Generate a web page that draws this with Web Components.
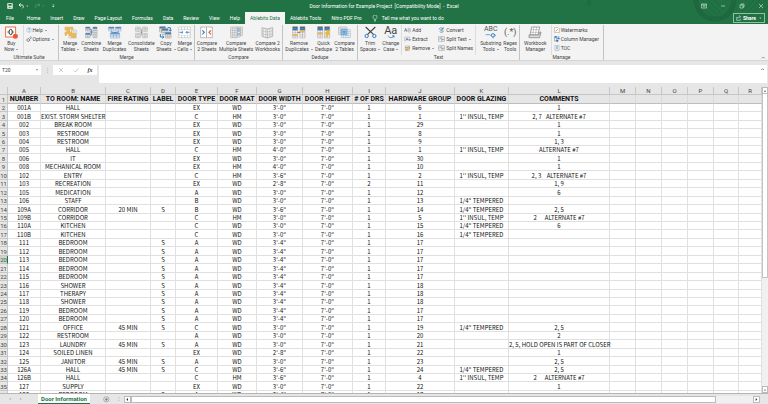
<!DOCTYPE html>
<html lang="en">
<head>
<meta charset="utf-8">
<title>Door Information for Example Project - Excel</title>
<style>
  html, body {
    height: 100%;
    margin: 0;
  }

  body {
    background: #e6e6e6;
    color: #444;
    font-family: Roboto, "Open Sans", sans-serif;
    font-size: 5px;
    line-height: 6px;
    overflow: hidden;
  }
</style>
</head>
<body>
<excel-window></excel-window>

<script>
const svg = (w, h, body) =>
  `<svg width="${w}" height="${h}" viewBox="0 0 ${w * 3} ${h * 3}" fill="none" aria-hidden="true">${body}</svg>`

// a small spreadsheet: outer box, inner lines and optional coloured header
const grid = (x, y, w, h, cols, rows, line = '#999', head = '') => {
  let d = ''
  for (let i = 0; i <= cols; i++) d += `M${x + w * i / cols} ${y}v${h}`
  for (let i = 0; i <= rows; i++) d += `M${x} ${y + h * i / rows}h${w}`
  const top = head ? `<path fill="${head}" d="M${x} ${y}h${w}v${h / rows}h${-w}z"/>` : ''
  return `<path fill="#fff" d="M${x} ${y}h${w}v${h}h${-w}z"/>${top}<path stroke="${line}" stroke-width="1.5" d="${d}"/>`
}

const BLUE = '#2f7cc4'
const SAND = '#e8b95c'

const icons = {
  buy: svg(13, 13, `
    <rect x="2" y="3" width="30" height="30" fill="#fff" stroke="#e8542f" stroke-width="2.5"/>
    <ellipse cx="17" cy="18" rx="5" ry="8" stroke="#333" stroke-width="3"/>
    <path stroke="#333" stroke-width="2" d="M7 18h5M22 18h5"/>
    <circle cx="31" cy="31" r="7.500" fill="#f0562f"/>`),
  mergeTables: svg(13, 13, `
    ${grid(15, 12, 22, 24, 3, 4, '#aaa')}
    <path fill="${SAND}" d="M2 2h26v11h-6v-4h-4v8h7v13H14v-6H9v5H2V17h5v-4H2z"/>
    <path fill="${SAND}" d="M24 21h12v15H20v-8h4z"/>`),
  combine: svg(13, 13, `
    ${grid(2, 3, 13, 12, 2, 3, '#888', BLUE)}${grid(2, 21, 13, 14, 2, 3, '#888', BLUE)}
    ${grid(24, 3, 12, 32, 2, 6, '#888', BLUE)}
    <path stroke="${BLUE}" stroke-width="2.500" d="M15 18h8M15 10h4v17h-4"/>`),
  duplicates: svg(14, 13, `
    ${grid(2, 3, 16, 12, 2, 3, '#7f9dbd', BLUE)}${grid(23, 3, 16, 12, 2, 3, '#7f9dbd', BLUE)}
    ${grid(7, 21, 28, 15, 3, 4, '#7f9dbd', '#5ba3dc')}
    <path stroke="${BLUE}" stroke-width="2.500" d="M10 16v3h21v-3M20.500 18v4"/>`),
  consolidate: svg(13, 13, `
    ${grid(2, 3, 14, 13, 2, 3)}${grid(23, 3, 14, 13, 2, 3)}${grid(2, 22, 14, 13, 2, 3)}${grid(23, 22, 14, 13, 2, 3)}
    <path stroke="#888" stroke-width="2" d="M16 19h7M19.500 10v18"/>`),
  copySheets: svg(13, 13, `
    ${grid(2, 2, 17, 16, 3, 3, '#888', BLUE)}${grid(9, 8, 18, 17, 3, 3, '#888', BLUE)}${grid(19, 19, 17, 17, 3, 3, '#888', BLUE)}
    <path stroke="${BLUE}" stroke-width="3" d="M26 5h8v10M30 11l4 5 4-5M4 24v9h10M10 29l5 4-5 4"/>`),
  mergeCells: svg(13, 13, `
    ${grid(2, 3, 35, 32, 4, 4, '#b5b5b5')}
    <path fill="#fff" d="M7 12h25v15H7z"/>
    <path stroke="${BLUE}" stroke-width="2.500" d="M5 19h10M24 19h10M11 15l4 4-4 4M28 15l-4 4 4 4"/>`),
  compareSheets: svg(13, 13, `
    <path fill="#fff" stroke="#999" stroke-width="2" d="M17 3H2v32h15M22 3h15v32H22"/>
    <path stroke="#777" stroke-width="1.500" d="M19.500 1v36"/>
    <path stroke="${BLUE}" stroke-width="3.500" d="M7 13l6 6-6 6"/>
    <path stroke="#e8542f" stroke-width="3.500" d="M33 13l-6 6 6 6"/>`),
  compareMultiple: svg(13, 13, `
    ${grid(18, 3, 19, 26, 3, 5, '#999')}${grid(10, 6, 20, 27, 3, 5, '#999', '#bcd5ec')}${grid(2, 3, 19, 32, 3, 6, '#999')}
    <path fill="#8db9e0" d="M22 11h7v6h-7zM22 21h7v6h-7z"/>`),
  compareBooks: svg(14, 13, `
    <path fill="#f7f7f7" stroke="#999" stroke-width="2" d="M3 5l16 4 16-4v26l-16 5-16-5zM19 9v27"/>
    <path stroke="#aaa" stroke-width="1.500" d="M8 7v26M14 8v26M25 8v26M30 7v26M3 14l16 4 16-4M3 23l16 4 16-4"/>`),
  removeDup: svg(14, 13, `
    ${grid(2, 2, 15, 34, 2, 6, '#999', '#555')}${grid(24, 2, 15, 34, 2, 6, '#999', '#555')}
    <path fill="${BLUE}" d="M2 7h15v6H2zM24 7h15v6H24z"/>
    <path fill="${SAND}" d="M2 24h15v6H2zM24 13h15v6H24z"/>
    <path stroke="#333" stroke-width="2" d="M17 19h7"/>`),
  quickDedupe: svg(14, 13, `
    ${grid(2, 2, 15, 34, 2, 6, '#999', '#555')}${grid(23, 2, 15, 34, 2, 6, '#999', '#555')}
    <path fill="${BLUE}" d="M2 7h15v6H2zM23 7h15v6H23z"/>
    <path fill="${SAND}" d="M2 19h15v6H2z"/>
    <path fill="#f2b233" d="M31 11h8l-4 9h5L25 38l4-13h-5z"/>`),
  compareTables: svg(13, 13, `
    ${grid(2, 3, 25, 23, 4, 4, '#999')}${grid(10, 11, 27, 24, 4, 4, '#8aa9c7')}
    <path fill="#a9cdec" stroke="${BLUE}" stroke-width="1.500" d="M10 11h17v15H10z"/>
    <path stroke="${BLUE}" stroke-width="2.500" d="M14 17h9M14 21h9"/>`),
  trim: svg(13, 13, `
    <path stroke="#444" stroke-width="3.500" d="M5 3l24 23M34 3L10 26"/>
    <circle cx="8" cy="30" r="5" stroke="${BLUE}" stroke-width="3"/>
    <circle cx="31" cy="30" r="5" stroke="${BLUE}" stroke-width="3"/>`),
  workbook: svg(14, 13, `
    <path fill="#fff" stroke="#777" stroke-width="2" d="M11 3h24l-5 24H6z"/>
    <path stroke="#999" stroke-width="1.500" d="M18 3l-4 24M26 3l-4 24M9 11h24M8 19h24"/>
    <path fill="#ddd" stroke="#777" stroke-width="2" d="M3 27h29l4-9h3l-4 17H3z"/>`),
  help: svg(6, 6, `<circle cx="9" cy="9" r="7" fill="#fff" stroke="#8aa4bf" stroke-width="1.500"/><path stroke="${BLUE}" stroke-width="2" d="M7 7c0-3 5-3 4 0l-2 2v2M9 12v2"/>`),
  options: svg(6, 6, `<circle cx="7" cy="12" r="4" stroke="#666" stroke-width="2"/><circle cx="14" cy="5" r="2.500" stroke="#666" stroke-width="1.500"/><path stroke="#666" stroke-width="1.500" d="M7 6v2M1 12h2M12 12h2M7 16v2"/>`),
  add: svg(7, 6, `<path fill="#fff" stroke="#999" stroke-width="1.500" d="M12 4h7v11h-7z"/><path stroke="#444" stroke-width="1.500" d="M1 14L5 4l4 10M3 11h5"/><path stroke="${BLUE}" stroke-width="2" d="M15 6v7"/>`),
  extract: svg(7, 6, `<path stroke="#999" stroke-width="1.500" d="M2 3v12h4M2 3h15v4"/><path stroke="#444" stroke-width="1.500" d="M6 13l3-7 3 7M7 11h4"/><path stroke="${BLUE}" stroke-width="2" d="M13 11h6M16 8l3 3-3 4"/>`),
  remove: svg(7, 6, `<path fill="#fff" stroke="#888" stroke-width="1.500" d="M4 3h12v13H4z"/><path stroke="#444" stroke-width="1.500" d="M4 8h9"/><path fill="${SAND}" stroke="#a56a2d" d="M6 13l8-8 4 3-8 8H6z"/>`),
  convert: svg(7, 6, `<path stroke="${BLUE}" stroke-width="2" d="M3 8c0-6 9-7 12-3M11 6h5V1M17 11c-1 6-9 6-12 3"/><path stroke="#555" stroke-width="1.500" d="M7 8h7M7 11h7"/>`),
  split: svg(7, 6, `<path fill="#fff" stroke="#888" stroke-width="1.500" d="M2 2h17v14H2z"/><path stroke="${BLUE}" stroke-width="2" d="M5 6h5M12 11h5"/><path stroke="#888" stroke-width="1.500" d="M2 9h17M11 2v14"/>`),
  watermark: svg(6, 6, `<path fill="#fff" stroke="#888" stroke-width="1.500" d="M2 1h10l4 4v12H2z"/><path stroke="#e88b3a" stroke-width="2.500" d="M5 13l7-7"/>`),
  columns: svg(6, 6, `<path fill="#fff" stroke="#555" stroke-width="1.500" d="M2 2h6v13H2z"/><path fill="${BLUE}" d="M2 1h6v4H2zM10 6h7v4h-7zM7 12h6v5H7z"/><path stroke="${BLUE}" stroke-width="1.500" d="M10 3h6M14 1v5"/>`),
  toc: svg(6, 6, `<path fill="#fff" stroke="#888" stroke-width="1.500" d="M3 1h12v15H3z"/><path stroke="${BLUE}" stroke-width="1.500" d="M6 5h6M6 8h6M6 11h6"/>`),
}

// glyph icons whose letters stay text
const glyphs = {
  changeCase: `<span style="font:11px/9px Roboto,sans-serif;color:#444">Aa</span>${svg(8, 4, `<path stroke="${BLUE}" stroke-width="2.500" d="M3 2c4 8 14 8 18 0M15 3l6-1v6"/>`)}`,
  regex: `<span style="font:9px/13px Roboto,sans-serif;color:#555">(.*)</span>`,
  substring: `<span style="font:7px/7px Roboto,sans-serif;color:#555">ABC</span>${svg(12, 6, `<path stroke="${BLUE}" stroke-width="2" d="M2 5h13"/><circle cx="24" cy="7" r="5" stroke="${BLUE}" stroke-width="3"/><path stroke="${BLUE}" stroke-width="2" d="M24 12v4M16 7h3M29 7h4"/>`)}`,
}

const resetButton = `
  button {
    margin: 0;
    padding: 0;
    border: none;
    background: none;
    color: inherit;
    font: inherit;
    white-space: nowrap;
  }

  svg {
    display: block;
    flex: none;
  }
`

class TitleBar extends HTMLElement {
  constructor () {
    super()
    this.attachShadow({ mode: 'open' })
  }

  connectedCallback () {
    this.shadowRoot.innerHTML = /* html */`
      <style>
        ${resetButton}
        :host {
          display: grid;
          grid-template-columns: 1fr auto 1fr;
          align-items: center;
          height: 12px;
          padding: 0 4px;
          color: #fff;
        }

        h1 {
          margin: 0;
          font-size: 5px;
          font-weight: 400;
          line-height: 10px;
          white-space: pre;
        }

        .quick, .controls {
          display: flex;
          align-items: center;
        }

        .quick {
          gap: 5px;
          padding-left: 3px;
        }

        .controls {
          gap: 13px;
          justify-content: flex-end;
        }
      </style>
      <div class="quick">
        <button aria-label="Save">${svg(6, 6, '<path fill="#fff" fill-rule="evenodd" d="M1 1h16v16H1zM4 3v5h10V3zM5 11v4h3v-2h3v2h2v-4z"/>')}</button>
        <button aria-label="Undo">${svg(11, 6, '<path stroke="#fff" stroke-width="2.5" d="M8 1L3 6l5 5M3 6h9c5 0 5 8 1 10"/><path fill="#fff" d="M25 8h6l-3 3z"/>')}</button>
        <button aria-label="Redo">${svg(11, 6, '<path stroke="#5f9f7c" stroke-width="2" d="M13 1l5 5-5 5M18 6H8c-5 0-5 8-1 10"/><path fill="#5f9f7c" d="M25 8h6l-3 3z"/>')}</button>
        <button aria-label="Customize toolbar">${svg(6, 6, '<path fill="#fff" d="M7 5h6v2H7zM7 9h6l-3 4z"/>')}</button>
      </div>
      <h1>Door Information for Example Project  [Compatibility Mode]  -  Excel</h1>
      <div class="controls">
        <button aria-label="Ribbon display options">${svg(6, 6, '<path stroke="#fff" stroke-width="1.5" d="M1 3h16v12H1zM1 6h16M9 13V8M6 11l3-3 3 3"/>')}</button>
        <button aria-label="Minimize">${svg(6, 6, '<path stroke="#fff" stroke-width="1.5" d="M3 9h12"/>')}</button>
        <button aria-label="Restore">${svg(6, 6, '<path stroke="#fff" stroke-width="1.5" d="M3 6h9v9H3zM6 6V3h9v9h-3"/>')}</button>
        <button aria-label="Close">${svg(6, 6, '<path stroke="#fff" stroke-width="1.5" d="M3 3l12 12M15 3L3 15"/>')}</button>
      </div>
    `
  }
}

class MenuTabs extends HTMLElement {
  constructor () {
    super()
    this.attachShadow({ mode: 'open' })
  }

  connectedCallback () {
    const tabs = ['File', 'Home', 'Insert', 'Draw', 'Page Layout', 'Formulas', 'Data', 'Review', 'View', 'Help', 'Ablebits Data', 'Ablebits Tools', 'Nitro PDF Pro']
    this.shadowRoot.innerHTML = /* html */`
      <style>
        ${resetButton}
        :host {
          display: flex;
          align-items: stretch;
          height: 12px;
          padding-right: 3px;
          color: #fff;
        }

        nav {
          display: flex;
          flex: 1;
        }

        nav button {
          padding: 0 5px;
        }

        /* File opens a page of its own, so it stands apart */
        nav button:first-child {
          padding: 0 8px 0 6px;
        }

        nav button[aria-selected] {
          background: #f3f3f3;
          color: #217346;
        }

        nav .tell {
          display: flex;
          align-items: center;
          gap: 4px;
        }

        .share {
          display: flex;
          align-items: center;
          align-self: center;
          gap: 2px;
          height: 10px;
          padding: 0 2px;
          border: 1px solid #8fc0a5;
          font-weight: 700;
        }
      </style>
      <nav role="tablist">
        ${tabs.map(tab => `<button role="tab"${tab === 'Ablebits Data' ? ' aria-selected="true"' : ''}>${tab}</button>`).join('')}
        <button class="tell">${svg(6, 7, '<path stroke="#fff" stroke-width="1.5" d="M6 13c0-3-3-3-3-7a6 6 0 0 1 12 0c0 4-3 4-3 7zM6 16h6M7 19h4"/>')}Tell me what you want to do</button>
      </nav>
      <button class="share">${svg(5, 6, '<path stroke="#fff" stroke-width="1.5" d="M5 7H2v9h11v-5M5 11c0-4 3-6 8-6M10 1l4 4-4 4"/>')}Share${svg(4, 4, '<path fill="#fff" d="M4 5h6l-3 3z"/>')}</button>
    `
  }
}

class RibbonGroup extends HTMLElement {
  constructor () {
    super()
    this.attachShadow({ mode: 'open' })
  }

  connectedCallback () {
    this.shadowRoot.innerHTML = /* html */`
      <style>
        :host {
          display: flex;
          flex: none;
          flex-direction: column;
          justify-content: space-between;
          box-sizing: border-box;
          margin-top: 1px;
          border-right: 1px solid #c3c3c3;
        }

        .tools {
          display: flex;
          flex: 1;
          justify-content: space-evenly;
        }

        .name {
          line-height: 5px;
          text-align: center;
        }
      </style>
      <div class="tools"><slot></slot></div>
      <div class="name">${this.getAttribute('name')}</div>
    `
  }
}

class RibbonTool extends HTMLElement {
  constructor () {
    super()
    this.attachShadow({ mode: 'open' })
  }

  connectedCallback () {
    const icon = this.getAttribute('icon')
    const arrow = this.hasAttribute('menu') ? '<i></i>' : ''
    this.shadowRoot.innerHTML = /* html */`
      <style>
        ${resetButton}
        :host {
          display: block;
          padding-top: 1px;
        }

        button {
          display: flex;
          flex-direction: column;
          align-items: center;
        }

        .icon {
          display: flex;
          flex-direction: column;
          align-items: center;
          height: 13px;
          margin-bottom: 1px;
        }

        i {
          display: inline-block;
          margin-left: 2px;
          border: 1px solid transparent;
          border-top-color: #555;
          border-bottom: none;
          vertical-align: middle;
        }

        :host([small]) {
          padding: 0;
        }

        :host([small]) button {
          flex-direction: row;
          gap: 1px;
          height: 9px;
        }

        :host([small]) .icon {
          height: auto;
          margin: 0;
        }
      </style>
      <button>
        <span class="icon">${glyphs[icon] || icons[icon]}</span>
        <span><slot></slot>${arrow}</span>
      </button>
    `
  }
}

class ExcelRibbon extends HTMLElement {
  constructor () {
    super()
    this.attachShadow({ mode: 'open' })
  }

  connectedCallback () {
    this.shadowRoot.innerHTML = /* html */`
      <style>
        ${resetButton}
        :host {
          display: flex;
          height: 37px;
          border-bottom: 1px solid #d5d5d5;
          box-sizing: border-box;
          background: #f3f3f3;
        }

        .stack {
          padding-left: 2px;
          border-left: 1px solid #dcdcdc;
        }

        .stack.plain {
          border: none;
        }

        .split {
          padding-left: 4px;
          border-left: 1px solid #dcdcdc;
        }

        .ultimate { width: 59px; }
        .merge { width: 136px; }
        .compare { width: 88px; }
        .dedupe { width: 75px; }
        .text { width: 162px; }
        .manage { width: 84px; }

        .collapse {
          margin: auto 2px 0 auto;
        }
      </style>
      <ribbon-group class="ultimate" name="Ultimate Suite">
        <ribbon-tool icon="buy" menu>Buy<br>Now</ribbon-tool>
        <div class="stack">
          <ribbon-tool small icon="help" menu>Help</ribbon-tool>
          <ribbon-tool small icon="options" menu>Options</ribbon-tool>
        </div>
      </ribbon-group>
      <ribbon-group class="merge" name="Merge">
        <ribbon-tool icon="mergeTables" menu>Merge<br>Tables</ribbon-tool>
        <ribbon-tool icon="combine">Combine<br>Sheets</ribbon-tool>
        <ribbon-tool icon="duplicates">Merge<br>Duplicates</ribbon-tool>
        <ribbon-tool icon="consolidate">Consolidate<br>Sheets</ribbon-tool>
        <ribbon-tool icon="copySheets" menu>Copy<br>Sheets</ribbon-tool>
        <ribbon-tool icon="mergeCells" menu>Merge<br>Cells</ribbon-tool>
      </ribbon-group>
      <ribbon-group class="compare" name="Compare">
        <ribbon-tool icon="compareSheets">Compare<br>2 Sheets</ribbon-tool>
        <ribbon-tool icon="compareMultiple">Compare<br>Multiple Sheets</ribbon-tool>
        <ribbon-tool icon="compareBooks">Compare 2<br>Workbooks</ribbon-tool>
      </ribbon-group>
      <ribbon-group class="dedupe" name="Dedupe">
        <ribbon-tool icon="removeDup" menu>Remove<br>Duplicates</ribbon-tool>
        <ribbon-tool icon="quickDedupe">Quick<br>Dedupe</ribbon-tool>
        <ribbon-tool icon="compareTables">Compare<br>2 Tables</ribbon-tool>
      </ribbon-group>
      <ribbon-group class="text" name="Text">
        <ribbon-tool icon="trim" menu>Trim<br>Spaces</ribbon-tool>
        <ribbon-tool icon="changeCase" menu>Change<br>Case</ribbon-tool>
        <div class="stack">
          <ribbon-tool small icon="add">Add</ribbon-tool>
          <ribbon-tool small icon="extract">Extract</ribbon-tool>
          <ribbon-tool small icon="remove" menu>Remove</ribbon-tool>
        </div>
        <div class="stack plain">
          <ribbon-tool small icon="convert">Convert</ribbon-tool>
          <ribbon-tool small icon="split" menu>Split Text</ribbon-tool>
          <ribbon-tool small icon="split">Split Names</ribbon-tool>
        </div>
        <ribbon-tool class="split" icon="substring" menu>Substring<br>Tools</ribbon-tool>
        <ribbon-tool icon="regex">Regex<br>Tools</ribbon-tool>
      </ribbon-group>
      <ribbon-group class="manage" name="Manage">
        <ribbon-tool icon="workbook">Workbook<br>Manager</ribbon-tool>
        <div class="stack">
          <ribbon-tool small icon="watermark">Watermarks</ribbon-tool>
          <ribbon-tool small icon="columns">Column Manager</ribbon-tool>
          <ribbon-tool small icon="toc">TOC</ribbon-tool>
        </div>
      </ribbon-group>
      <button class="collapse" aria-label="Collapse the ribbon">${svg(5, 5, '<path stroke="#555" stroke-width="2" d="M3 10l4-4 4 4"/>')}</button>
    `
  }
}

class FormulaBar extends HTMLElement {
  constructor () {
    super()
    this.attachShadow({ mode: 'open' })
  }

  connectedCallback () {
    this.shadowRoot.innerHTML = /* html */`
      <style>
        ${resetButton}
        :host {
          display: flex;
          align-items: flex-start;
          padding: 4px 1px 4px 0;
        }

        .name-box, .actions, .formula {
          display: flex;
          align-items: center;
          box-sizing: border-box;
          background: #fff;
        }

        .name-box {
          width: 41px;
          height: 10px;
          padding: 0 2px;
        }

        input {
          box-sizing: border-box;
          width: 100%;
          min-width: 0;
          margin: 0;
          padding: 0;
          border: none;
          outline: none;
          background: none;
          color: #444;
          font: inherit;
        }

        .dots {
          width: 12px;
          color: #999;
          line-height: 10px;
          text-align: center;
        }

        .actions {
          justify-content: space-around;
          width: 44px;
          height: 10px;
        }

        .fx {
          color: #333;
          font: italic 700 6px/8px "Liberation Serif", serif;
        }

        .formula {
          flex: 1;
          align-items: flex-start;
          height: 18px;
          margin-left: 2px;
          padding: 2px;
        }
      </style>
      <div class="name-box">
        <input aria-label="Name box" value="T20">
        ${svg(4, 4, '<path fill="#666" d="M3 4h6l-3 4z"/>')}
      </div>
      <span class="dots">⋮</span>
      <div class="actions">
        <button aria-label="Cancel">${svg(6, 6, '<path stroke="#b0b0b0" stroke-width="2" d="M3 3l12 12M15 3L3 15"/>')}</button>
        <button aria-label="Enter">${svg(6, 6, '<path stroke="#b0b0b0" stroke-width="2" d="M2 10l5 5L16 4"/>')}</button>
        <button class="fx" aria-label="Insert function">fx</button>
      </div>
      <div class="formula">
        <input aria-label="Formula">
        ${svg(5, 5, '<path stroke="#555" stroke-width="2" d="M4 9l4-4 4 4"/>')}
      </div>
    `
  }
}

const headings = ['NUMBER', 'TO ROOM: NAME', 'FIRE RATING', 'LABEL', 'DOOR TYPE', 'DOOR MAT', 'DOOR WIDTH', 'DOOR HEIGHT', '# OF DRS', 'HARDWARE GROUP', 'DOOR GLAZING', 'COMMENTS']
const INSUL = "1'' INSUL, TEMP"
const TEMPERED = '1/4" TEMPERED'

// number, room, fire rating, label, type, material, width, doors, hardware, glazing, comments
const doors = [
  ['001A', 'HALL', '', '', 'EX', 'WD', `3'-0"`, 1, 6, '', '1'],
  ['001B', 'EXIST. STORM SHELTER', '', '', 'C', 'HM', `3'-0"`, 1, 1, INSUL, '2, 7   ALTERNATE #7'],
  ['002', 'BREAK ROOM', '', '', 'EX', 'WD', `3'-0"`, 1, 29, '', '1'],
  ['003', 'RESTROOM', '', '', 'EX', 'WD', `3'-0"`, 1, 8, '', '1'],
  ['004', 'RESTROOM', '', '', 'EX', 'WD', `3'-0"`, 1, 9, '', '1, 3'],
  ['005', 'HALL', '', '', 'C', 'HM', `4'-0"`, 1, 1, INSUL, 'ALTERNATE #7'],
  ['006', 'IT', '', '', 'EX', 'WD', `3'-0"`, 1, 30, '', '1'],
  ['008', 'MECHANICAL ROOM', '', '', 'EX', 'HM', `4'-0"`, 1, 10, '', '1'],
  ['102', 'ENTRY', '', '', 'C', 'HM', `3'-6"`, 1, 2, INSUL, '2, 3    ALTERNATE #7'],
  ['103', 'RECREATION', '', '', 'EX', 'WD', `2'-8"`, 2, 11, '', '1, 9'],
  ['105', 'MEDICATION', '', '', 'A', 'WD', `3'-0"`, 1, 12, '', '6'],
  ['106', 'STAFF', '', '', 'B', 'WD', `3'-0"`, 1, 13, TEMPERED, ''],
  ['109A', 'CORRIDOR', '20 MIN', 'S', 'B', 'WD', `3'-6"`, 1, 14, TEMPERED, '2, 5'],
  ['109B', 'CORRIDOR', '', '', 'C', 'HM', `3'-0"`, 1, 5, INSUL, '2      ALTERNATE #7'],
  ['110A', 'KITCHEN', '', '', 'C', 'WD', `3'-0"`, 1, 15, TEMPERED, '6'],
  ['110B', 'KITCHEN', '', '', 'C', 'WD', `3'-0"`, 1, 16, TEMPERED, ''],
  ['111', 'BEDROOM', '', 'S', 'A', 'WD', `3'-4"`, 1, 17, '', ''],
  ['112', 'BEDROOM', '', 'S', 'A', 'WD', `3'-4"`, 1, 17, '', ''],
  ['113', 'BEDROOM', '', 'S', 'A', 'WD', `3'-4"`, 1, 17, '', ''],
  ['114', 'BEDROOM', '', 'S', 'A', 'WD', `3'-4"`, 1, 17, '', ''],
  ['115', 'BEDROOM', '', 'S', 'A', 'WD', `3'-4"`, 1, 17, '', ''],
  ['116', 'SHOWER', '', 'S', 'A', 'WD', `3'-4"`, 1, 18, '', ''],
  ['117', 'THERAPY', '', 'S', 'A', 'WD', `3'-4"`, 1, 18, '', ''],
  ['118', 'SHOWER', '', 'S', 'A', 'WD', `3'-4"`, 1, 18, '', ''],
  ['119', 'BEDROOM', '', 'S', 'A', 'WD', `3'-4"`, 1, 17, '', ''],
  ['120', 'BEDROOM', '', 'S', 'A', 'WD', `3'-4"`, 1, 17, '', ''],
  ['121', 'OFFICE', '45 MIN', 'S', 'C', 'WD', `3'-0"`, 1, 19, TEMPERED, '2, 5'],
  ['122', 'RESTROOM', '', '', 'A', 'WD', `3'-0"`, 1, 20, '', '2'],
  ['123', 'LAUNDRY', '45 MIN', 'S', 'A', 'WD', `3'-0"`, 1, 21, '', '2, 5, HOLD OPEN IS PART OF CLOSER'],
  ['124', 'SOILED LINEN', '', '', 'EX', 'WD', `2'-8"`, 1, 22, '', '1'],
  ['125', 'JANITOR', '45 MIN', 'S', 'A', 'WD', `3'-0"`, 1, 23, '', '2, 5'],
  ['126A', 'HALL', '45 MIN', 'S', 'C', 'WD', `3'-6"`, 1, 24, TEMPERED, '2, 5'],
  ['126B', 'HALL', '', '', 'C', 'HM', `3'-6"`, 1, 4, INSUL, '2      ALTERNATE #7'],
  ['127', 'SUPPLY', '', '', 'EX', 'WD', `3'-0"`, 1, 22, '', '1'],
  ['128', 'BEDROOM', '', 'S', 'A', 'WD', `3'-4"`, 1, 17, '', ''],
]

class SheetGrid extends HTMLElement {
  constructor () {
    super()
    this.attachShadow({ mode: 'open' })
    this.activeRow = 20
  }

  connectedCallback () {
    // the last column takes what is left of the window
    const widths = [8, 33, 65, 45, 25, 42, 39, 46, 50, 33, 69, 54, 101, 26, 26, 26, 26, 25]
    const letters = [...'ABCDEFGHIJKLMNOPQR']
    const records = [headings, ...doors.map(([...d]) => {
      d.splice(7, 0, `7'-0"`)
      return d
    })]

    this.shadowRoot.innerHTML = /* html */`
      <style>
        ${resetButton}
        :host {
          display: flex;
          flex: 1;
          min-height: 0;
        }

        .view {
          flex: 1;
          min-width: 0;
          overflow: hidden;
        }

        table {
          width: 100%;
          border-collapse: separate;
          border-spacing: 0;
          table-layout: fixed;
          background: #fff;
          color: #111;
          font: 6px/7px "Noto Sans CJK SC", "Open Sans", sans-serif;
        }

        th, td {
          box-sizing: border-box;
          padding: 0;
          border-right: 1px solid #e0e0e0;
          border-bottom: 1px solid #e0e0e0;
          text-align: center;
          vertical-align: middle;
          white-space: pre;
        }

        tr { height: 8px; }

        /* the zoom level makes some rows a pixel taller */
        tbody tr:nth-child(9n + 1),
        tbody tr:nth-child(9n + 3),
        tbody tr:nth-child(9n + 5),
        tbody tr:nth-child(9n + 8) {
          height: 9px;
        }

        thead th, tbody th {
          border-color: #c6c6c6;
          background: #e6e6e6;
          color: #444;
          font-family: Roboto, sans-serif;
          font-weight: 400;
        }

        tbody th.active {
          border-right-color: #217346;
          background: #d2d2d2;
          color: #217346;
        }

        tbody tr:first-child td {
          border-right-color: #d9d9d9;
          border-bottom-color: #bdbdbd;
          background: #e6e6e6;
          color: #111;
          font: 700 7px/7px Roboto, sans-serif;
        }

        .scroll {
          display: flex;
          flex-direction: column;
          justify-content: space-between;
          width: 6px;
          background: #f0f0f0;
        }

        .scroll button {
          height: 7px;
          border: 1px solid #bbb;
          background: #fff;
        }

        .thumb {
          flex: 0 0 60%;
          box-sizing: border-box;
          margin-bottom: auto;
          border: 1px solid #c3c3c3;
          border-top: none;
          background: #fff;
        }
      </style>
      <div class="view">
        <table>
          <colgroup>${widths.map(w => `<col style="width:${w}px">`).join('')}<col></colgroup>
          <thead><tr><th></th>${letters.map(l => `<th scope="col">${l}</th>`).join('')}</tr></thead>
          <tbody>${records.map((record, i) => this.row(i + 1, record, letters.length)).join('')}</tbody>
        </table>
      </div>
      <div class="scroll">
        <button aria-label="Scroll up">${svg(4, 4, '<path fill="#333" d="M3 8l3-4 3 4z"/>')}</button>
        <div class="thumb"></div>
        <button aria-label="Scroll down">${svg(4, 4, '<path fill="#333" d="M3 5l3 4 3-4z"/>')}</button>
      </div>
    `
  }

  row (number, record, length) {
    const active = number === this.activeRow ? ' class="active"' : ''
    const cells = Array.from({ length }, (_, i) => `<td>${record[i] ?? ''}</td>`)
    return `<tr><th scope="row"${active}>${number}</th>${cells.join('')}</tr>`
  }
}

class SheetBar extends HTMLElement {
  constructor () {
    super()
    this.attachShadow({ mode: 'open' })
  }

  connectedCallback () {
    this.shadowRoot.innerHTML = /* html */`
      <style>
        ${resetButton}
        :host {
          display: flex;
          align-items: center;
          height: 10px;
          padding-right: 8px;
          border-top: 1px solid #b5b5b5;
          background: #e6e6e6;
        }

        .arrows {
          display: flex;
          gap: 5px;
          width: 31px;
          padding-left: 7px;
        }

        .sheet {
          align-self: stretch;
          width: 52px;
          border-bottom: 1px solid #217346;
          background: #fff;
          color: #217346;
          font: 700 6px/8px Roboto, sans-serif;
        }

        .add {
          margin: 0 8px 0 13px;
        }

        .scroll {
          display: flex;
          flex: 1;
          height: 7px;
          margin-left: 4px;
          background: #f0f0f0;
        }

        .scroll button {
          box-sizing: border-box;
          width: 7px;
          border: 1px solid #bbb;
          background: #fff;
        }

        .thumb {
          flex: 0 0 92%;
          box-sizing: border-box;
          margin-right: auto;
          border: 1px solid #bbb;
          background: #fff;
        }
      </style>
      <div class="arrows">
        <button aria-label="Previous sheet">${svg(6, 6, '<path fill="#aaa" d="M11 5v8L7 9z"/>')}</button>
        <button aria-label="Next sheet">${svg(6, 6, '<path fill="#aaa" d="M7 5v8l4-4z"/>')}</button>
      </div>
      <button class="sheet">Door Information</button>
      <button class="add" aria-label="New sheet">${svg(7, 7, '<circle cx="10" cy="10" r="8" stroke="#777" stroke-width="1.5"/><path stroke="#666" stroke-width="2" d="M10 6v9M6 10h9"/>')}</button>
      ${svg(2, 6, '<path fill="#999" d="M2 3h2v2H2zM2 8h2v2H2zM2 13h2v2H2z"/>')}
      <div class="scroll">
        <button aria-label="Scroll left">${svg(4, 5, '<path fill="#333" d="M9 3v9L4 7.500z"/>')}</button>
        <div class="thumb"></div>
        <button aria-label="Scroll right">${svg(4, 5, '<path fill="#333" d="M5 3v9l5-4.500z"/>')}</button>
      </div>
    `
  }
}

class ExcelWindow extends HTMLElement {
  constructor () {
    super()
    this.attachShadow({ mode: 'open' })
  }

  connectedCallback () {
    this.shadowRoot.innerHTML = /* html */`
      <style>
        :host {
          display: flex;
          flex-direction: column;
          height: 100vh;
        }

        header {
          position: relative;
          background: #217346;
        }

        title-bar, menu-tabs {
          position: relative;
        }

        .pattern {
          position: absolute;
          top: 0;
          right: 0;
        }
      </style>
      <header>
        <svg class="pattern" width="190" height="24" fill="none" stroke="#1d683f">
          <circle cx="137" cy="0" r="19" stroke-width="5"/>
          <path d="M119 8l12 12M121 3l14 14M124 0l15 15M130 0l13 13M136 0l10 10M176 0l-12 12M182 0l-16 16M188 0l-20 20M190 6l-14 14M10 0v5M12 0v6M116 0v4" stroke-width="1"/>
        </svg>
        <title-bar></title-bar>
        <menu-tabs></menu-tabs>
      </header>
      <excel-ribbon></excel-ribbon>
      <formula-bar></formula-bar>
      <sheet-grid></sheet-grid>
      <sheet-bar></sheet-bar>
    `
  }
}

customElements.define('title-bar', TitleBar)
customElements.define('menu-tabs', MenuTabs)
customElements.define('ribbon-group', RibbonGroup)
customElements.define('ribbon-tool', RibbonTool)
customElements.define('excel-ribbon', ExcelRibbon)
customElements.define('formula-bar', FormulaBar)
customElements.define('sheet-grid', SheetGrid)
customElements.define('sheet-bar', SheetBar)
customElements.define('excel-window', ExcelWindow)
</script>
</body>
</html>
